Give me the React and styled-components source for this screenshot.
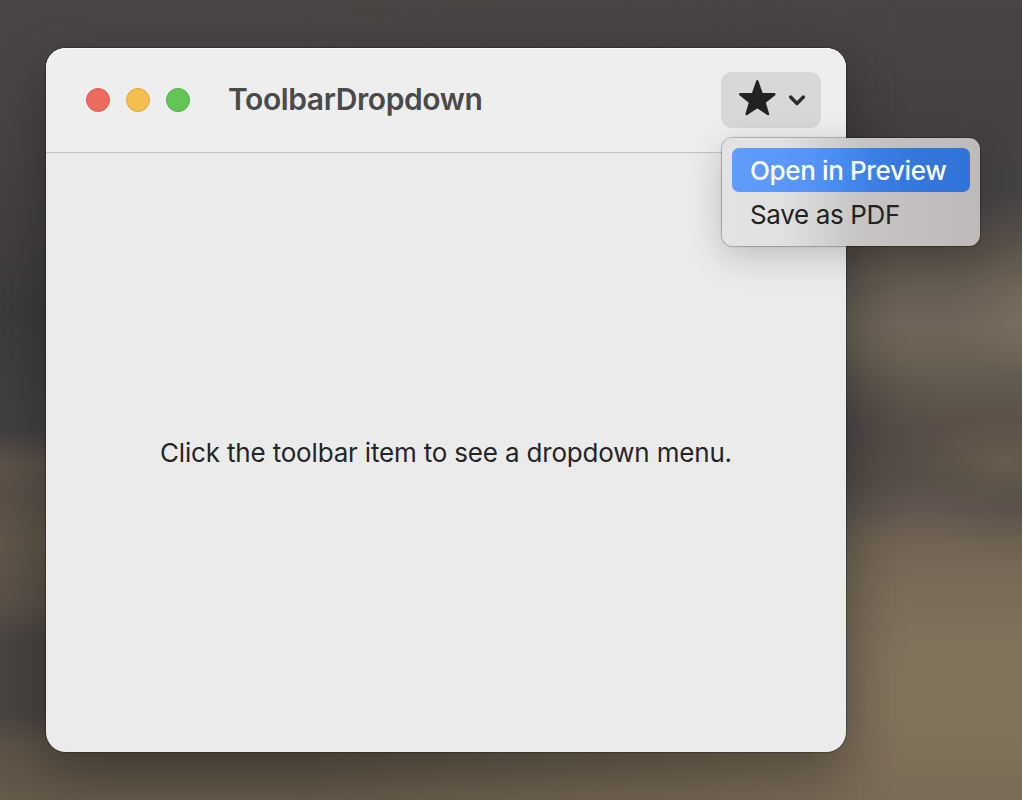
import React from "react";
import styled, { createGlobalStyle } from "styled-components";

const GlobalStyle = createGlobalStyle`
  *, *::before, *::after { box-sizing: border-box; }
  html, body { margin: 0; padding: 0; }
  body {
    font-family: Inter, "Liberation Sans", sans-serif;
    -webkit-font-smoothing: antialiased;
    overflow: hidden;
  }
`;

const Desktop = styled.main`
  position: relative;
  width: 100vw;
  height: 100vh;
  padding: 48px 0 0 46px;
  overflow: hidden;
  background: linear-gradient(
    to bottom,
    #4b4645 0, #4a4545 90px, #454142 200px, #3e3b3d 310px, #434041 430px,
    #5d5349 465px, #5a5048 495px, #60564a 540px, #5b5148 600px,
    #4a4541 640px, #4a4541 715px, #5c5247 745px, #665a4b 800px
  );

  /* Lighter clouds on the right side of the wallpaper. */
  &::before {
    content: "";
    position: absolute;
    inset: 0;
    background:
      radial-gradient(ellipse 90px 70px at 1040px 310px, rgba(146, 130, 108, 0.42), rgba(146, 130, 108, 0.14) 55%, transparent),
      radial-gradient(ellipse 80px 50px at 1005px 462px, rgba(122, 108, 84, 0.45), rgba(122, 108, 84, 0.16) 55%, transparent),
      radial-gradient(ellipse 110px 90px at 850px 440px, rgba(66, 60, 60, 0.35), rgba(66, 60, 60, 0.12) 60%, transparent),
      radial-gradient(ellipse 90px 70px at 1022px 500px, rgba(74, 68, 62, 0.3), transparent),
      linear-gradient(
        to bottom,
        #4a4545 0, #454142 110px, #444142 190px, #5b534a 255px, #70655a 325px,
        #6c6255 350px, #61584e 385px, #5a5048 425px, #595048 480px,
        #625750 510px, #726554 545px, #7a6c58 590px, #81725c 650px,
        #82745c 710px, #7b6c57 800px
      );
    mask-image: linear-gradient(to right, transparent 300px, #000 900px);
  }
`;

const Window = styled.section`
  position: relative;
  display: flex;
  flex-direction: column;
  width: 800px;
  height: 704px;
  border-radius: 20px;
  background: #ebebeb;
  box-shadow:
    0 0 1px 1px rgba(0, 0, 0, 0.26),
    0 20px 56px 2px rgba(0, 0, 0, 0.32);
`;

const Toolbar = styled.header`
  display: flex;
  align-items: center;
  flex: none;
  height: 105px;
  padding: 0 25px 0 40px;
  border-bottom: 1px solid #c6c6c6;
  border-radius: 20px 20px 0 0;
  background: #efeeee;
  box-shadow: inset 0 1px 0 #fafafa, 0 1px 0 #e3e3e3;
`;

const TrafficLights = styled.div`
  display: flex;
  gap: 16px;
`;

const Light = styled.span`
  width: 24px;
  height: 24px;
  border-radius: 50%;
  border: 1px solid ${(p) => p.$edge};
  background: ${(p) => p.$fill};
`;

const Title = styled.h1`
  margin: 0 auto 0 38px;
  padding-bottom: 2px;
  color: #4a4a4a;
  font-size: 30px;
  font-weight: 600;
  line-height: 36px;
  letter-spacing: -0.4px;
  white-space: nowrap;
`;

const DropdownAnchor = styled.div`
  position: relative;
`;

const DropdownButton = styled.button`
  display: block;
  width: 100px;
  height: 56px;
  padding: 0;
  border: 0;
  border-radius: 11px;
  background: #d8d8d8;

  svg { display: block; }
`;

const Menu = styled.ul`
  position: absolute;
  top: 66px;
  left: 1px;
  width: 258px;
  margin: 0;
  padding: 10px;
  list-style: none;
  border-radius: 11px;
  background: linear-gradient(to right, #e3e3e3 0, #e1e1e1 60px, #d5d4d3 97px, #c8c6c5 135px, #c3c0bf 175px, #bfbab9 258px);
  box-shadow:
    0 0 1px 1px rgba(0, 0, 0, 0.25),
    0 10px 36px rgba(0, 0, 0, 0.2);
`;

const MenuItem = styled.li`
  height: 44px;
  padding: 0 18px;
  border-radius: 7px;
  color: ${(p) => (p.$active ? "#fff" : "#222")};
  background: ${(p) =>
    p.$active
      ? "linear-gradient(to right, #619cfb 0, #5595f8 75px, #468bf0 110px, #397de2 148px, #3276da 195px, #3174d8 100%)"
      : "none"};
  font-size: 26px;
  font-weight: ${(p) => (p.$active ? 500 : 400)};
  line-height: 45px;
  letter-spacing: ${(p) => p.$tracking};
  white-space: nowrap;
`;

const Content = styled.div`
  display: flex;
  flex: 1;
  align-items: center;
  justify-content: center;
`;

const Message = styled.p`
  margin: 0;
  color: #252525;
  font-size: 26px;
  line-height: 32px;
  letter-spacing: -0.18px;
  white-space: nowrap;
`;

function StarDropdownIcon() {
  return (
    <svg width="100" height="56" viewBox="0 0 100 56" aria-hidden="true">
      <path
        d="M36.3 9.3 L40.7 22 L53.4 22.2 L43.4 30.2 L47 42 L36.3 35 L25.6 42 L29.2 30.2 L19.2 22.2 L31.9 22 Z"
        fill="#222"
        stroke="#222"
        strokeWidth="2.4"
        strokeLinejoin="round"
      />
      <path
        d="M69.6 25 L76 31.5 L82.4 25"
        fill="none"
        stroke="#2b2b2b"
        strokeWidth="3.4"
        strokeLinecap="round"
        strokeLinejoin="round"
      />
    </svg>
  );
}

export default function App() {
  return (
    <>
      <GlobalStyle />
      <Desktop>
        <Window>
          <Toolbar>
            <TrafficLights>
              <Light $fill="#ed6a5f" $edge="#d95a50" />
              <Light $fill="#f5bf4f" $edge="#dba640" />
              <Light $fill="#62c656" $edge="#50ad42" />
            </TrafficLights>
            <Title>ToolbarDropdown</Title>
            <DropdownAnchor>
              <DropdownButton aria-label="Favorites" aria-expanded="true">
                <StarDropdownIcon />
              </DropdownButton>
              <Menu>
                <MenuItem $active $tracking="-0.37px">Open in Preview</MenuItem>
                <MenuItem $tracking="-0.35px">Save as PDF</MenuItem>
              </Menu>
            </DropdownAnchor>
          </Toolbar>
          <Content>
            <Message>Click the toolbar item to see a dropdown menu.</Message>
          </Content>
        </Window>
      </Desktop>
    </>
  );
}
